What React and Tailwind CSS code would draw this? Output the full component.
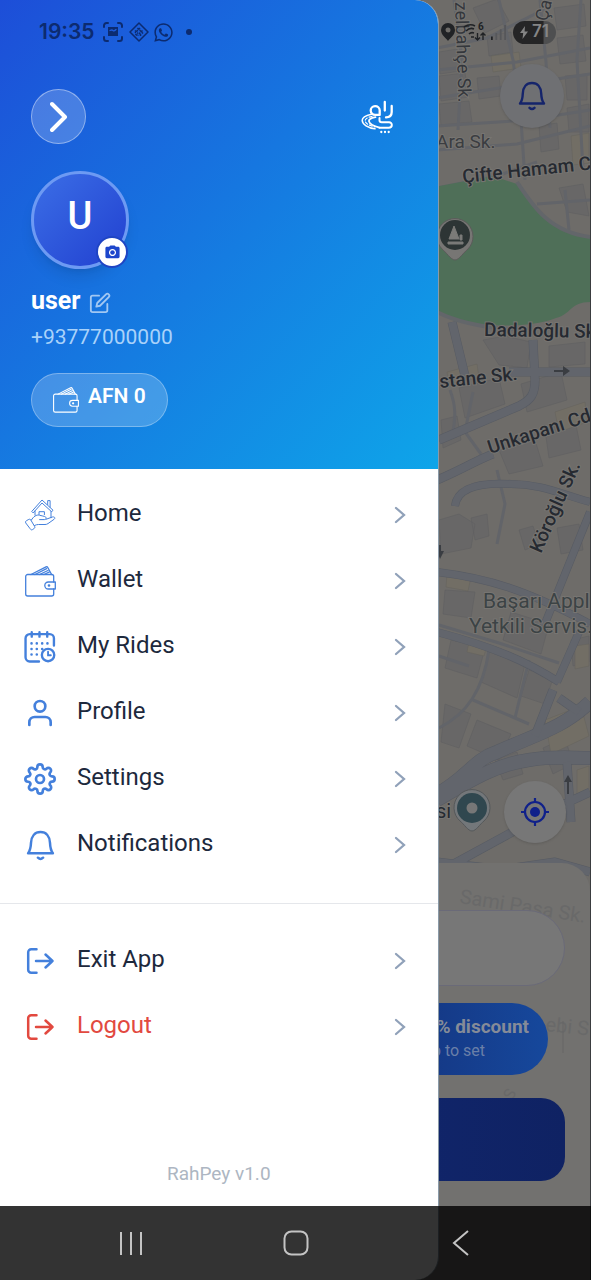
import { FiEdit, FiSettings, FiUser } from 'react-icons/fi';
import { FaWhatsapp } from 'react-icons/fa';
import { MdCameraAlt } from 'react-icons/md';

function HomeIcon() {
    return (
        <svg width="31" height="32" viewBox="0 0 31 32" fill="none" stroke="currentColor" strokeWidth="1" strokeLinejoin="round" strokeLinecap="round">
            <path d="M7 12.2 17 1 28 11.2l-1.3 1.6L17 4 8.4 13.6z" />
            <path d="M22.7 5.6V1.6h2.4v6.6M10 12v4M26 12.5v6.2M14 15.6v-2.9h5.4v2.9" />
            <path d="M.6 23.6c-.4-1 .2-1.6 1-2l2.2-1.2c.8-.4 1.6-.2 2 .6l3.8 6.4c.5 1 .3 1.6-.5 2.1l-1.6 1.1c-.9.5-1.5.4-2.1-.5z" />
            <path d="M6.4 21c2-3.400 5-5.600 8-4.800 2 .5 3.700.9 5 1.200 2.400.5 2.200 3.200 0 3.200h-4.800M21 20.300l6.400-2.300c1.800-.5 3.300.8 1.800 2.200l-6.200 4.400c-1 .7-2 .9-3 .9h-6.500c-1.500 0-2.500.3-4 1" />
        </svg>
    );
}

function WalletIcon({ size = 31 }) {
    return (
        <svg width={size} height={size} viewBox="0 0 31 31" fill="none" stroke="currentColor" strokeWidth="1.300" strokeLinejoin="round" strokeLinecap="round">
            <path d="M28.700 16V10.500a2 2 0 0 0-2-2H2.700a2 2 0 0 0-2 2v17.500a2 2 0 0 0 2 2h24a2 2 0 0 0 2-2V23" />
            <path d="M30.300 16h-7a3.500 3.500 0 0 0 0 7h7z" />
            <path d="M6 8.500 21 .9q1.200-.5 1.800.6l3.800 7M10 8.500l11.600-5.800M14.600 8.500l8.300-4M19 8.500l5-2.300" />
            <circle cx="24" cy="19.500" r=".7" />
        </svg>
    );
}

function RidesIcon() {
    return (
        <svg width="32" height="32" viewBox="0 0 31 31" fill="none" stroke="currentColor" strokeWidth="2.300" strokeLinecap="round">
            <path d="M29 14V7a4 4 0 0 0-4-4H5.500a4 4 0 0 0-4 4v18.500a4 4 0 0 0 4 4h9" />
            <path d="M7.500 1.200v4.300M15 1.200v4.300M22.500 1.200v4.300" />
            <path d="M7.300 12h.01M12.400 12h.01M17.600 12h.01M22.700 12h.01M7.300 17.400h.01M12.400 17.400h.01M17.600 17.400h.01M7.300 22.800h.01M12.400 22.800h.01" strokeWidth="2.500" />
            <circle cx="23.300" cy="23.300" r="6" />
            <path d="M23.300 20v3.500h2.700" strokeWidth="1.800" />
        </svg>
    );
}

function BellIcon({ size = 31 }) {
    return (
        <svg width={size} height={size} viewBox="0 0 30 30" fill="none" stroke="currentColor" strokeWidth="2.400" strokeLinecap="round" strokeLinejoin="round">
            <path d="M3 22.500h24c-2-2.500-2.600-5-2.800-10C23.900 6 20.500 2 15 2S6.100 6 5.800 12.500C5.600 17.500 5 20 3 22.500z" />
            <path d="M12.500 26.800q2.500 2.400 5 0" />
        </svg>
    );
}

function ExitIcon() {
    return (
        <svg width="30" height="30" viewBox="0 0 30 30" fill="none" stroke="currentColor" strokeWidth="2.500" strokeLinecap="round" strokeLinejoin="round">
            <path d="M11.500 3.200H6.200a3 3 0 0 0-3 3v17.600a3 3 0 0 0 3 3h5.300" />
            <path d="M11 15h16.500M20.500 8.500 27.500 15l-7 6.500" />
        </svg>
    );
}

function Chevron() {
    return (
        <svg width="12" height="18" viewBox="0 0 12 18" fill="none" stroke="currentColor" strokeWidth="2.300" strokeLinecap="round" className="text-slate-400">
            <path d="m2 2 8 7-8 7" />
        </svg>
    );
}

function Logo() {
    return (
        <svg width="34" height="35" viewBox="0 0 34 35" fill="none" stroke="#fff" strokeWidth="2.300" strokeLinecap="round" strokeLinejoin="round">
            <path d="M23.800 3v8.500M30.700 7v6c0 3.500-2.200 5.300-5.700 5.400" />
            <path d="M18.700 16v-4.700a4.500 4.300 0 1 0-4.500 4.500h4.500" />
            <path d="M18.500 19v2.200c0 1.500 1 2 2.200 2H28c3.800 0 3.800 5.600-.3 5.600h-9.200" strokeWidth="2" />
            <path d="M10.500 15.200C5 16.500 1.200 18 1.200 21.200c0 4.300 6 7.800 12.800 8.600" strokeWidth="1.500" />
            <path d="M11 17.300c-4.500 1.200-6.800 2.400-6.800 4.500 0 2.700 4.500 5 9.800 6" strokeWidth="1.200" strokeDasharray="3 2" />
            <path d="M14.500 18.200c-5 1-7 2.200-6.500 4.200.5 2.200 5 4.800 10.500 6.200" strokeWidth="1.800" />
            <path d="M20.300 33h.01M24 33h.01M27.700 33h.01" strokeWidth="2.300" />
        </svg>
    );
}

const mainItems = [
    { label: 'Home', icon: <HomeIcon /> },
    { label: 'Wallet', icon: <WalletIcon /> },
    { label: 'My Rides', icon: <RidesIcon /> },
    { label: 'Profile', icon: <FiUser size={32} /> },
    { label: 'Settings', icon: <FiSettings size={32} /> },
    { label: 'Notifications', icon: <BellIcon /> },
];

const exitItems = [
    { label: 'Exit App', icon: <ExitIcon /> },
    { label: 'Logout', icon: <ExitIcon />, danger: true },
];

function MenuItem({ item }) {
    return (
        <li>
            <button type="button" className="flex h-[66px] w-full items-center pl-6 pr-8 text-left">
                <span className={`flex w-8 justify-center ${item.danger ? 'text-[#e2493f]' : 'text-[#4480dc]'}`}>{item.icon}</span>
                <span className={`flex-1 pb-1 pl-[21px] text-[24px] ${item.danger ? 'text-[#e2493f]' : 'text-slate-800'}`}>
                    {item.label}
                </span>
                <Chevron />
            </button>
        </li>
    );
}

// Street map behind the drawer
function StreetMap() {
    return (
        <svg className="absolute inset-0 h-full w-full" viewBox="0 0 591 1280" preserveAspectRatio="xMaxYMin slice" fill="none">
            <rect width="591" height="1280" fill="#6e6c69" />

            {/* blocks */}
            <g fill="#686767" stroke="#5f5f61" strokeWidth=".6">
                <path d="M440 52l18-3 3 22-20 3zM474 8l24-9 12 22-24 12zM440 76l26-3 4 24-28 4zM478 78l22-2 2 20-22 3zM488 36l24-4 2 20-24 4zM440 104l30-3 3 21-31 3z" />
                <path d="M555 8l30-4 2 22-29 4zM558 38l26-3 3 26-26 3zM566 76l22-2v26h-20zM568 108l22-4v28h-20zM540 126l18-3 2 26-18 3zM560 188l24-4 6 32-22-4z" />
                <path d="M484 340l22-4 26 6-4 26-28-3zM550 346l36-4v22l-36 3zM460 388l40-10 6 26-40 14zM522 384l40-12 6 28-40 12zM442 420l16-4 4 24-18 8zM500 450l36-10 8 26-34 8zM546 430l30-10 6 30-32 8z" />
                <path d="M440 520l20-6 16 10-4 24-30 6zM472 518l16-4 2 22-14 4zM520 530l14-4 6 18-14 6zM558 528l22-4 4 26-22 4zM446 590l30 2-4 26-28-4zM452 640l34 8-8 30-32-10zM490 652l36 12-8 34-36-16zM530 670l24 8-8 26-24-8z" />
                <path d="M446 704l26 10-12 34-18-6zM478 720l34 14-12 26-32-14zM544 748l22-10 8 26-20 10zM496 760l22-8 6 22-20 6zM572 640l18-4v26l-16 4zM512 612l38 12-8 30-38-14zM516 824l22-10 8 16-18 12z" />
            </g>
            <g fill="#726e65" stroke="#65625d" strokeWidth=".5">
                <path d="M492 56l28-4 2 16-28 4zM572 136l18-3v30l-16 2zM556 412l30-10 2 20-28 10zM448 372l30-8 2 14-30 6zM448 574l24 3-3 14-22-4zM576 646l14-2v22l-14 3zM546 720l36-14 8 30-38 18zM578 770l12-4v26l-12 5zM470 642l18 4-3 10-17-4z" />
            </g>

            {/* minor streets */}
            <g stroke="#626469" strokeWidth="3">
                <path d="M438 48l50-10 60-30M438 70l80-8 73-14M438 98l100-16 53-8M438 126l90-6 63-10M438 150l80-6 73-18M455 0l8 60-4 70M500 0l14 60 8 60 4 60M541 0l6 62 4 66M582 0l-4 60 6 110" />
                <path d="M438 188l60-12 40-14M538 204l53-4M566 190l4 40" />
                <path d="M498 470l8 34-8 40M440 625l60 18 60 20M490 650c-6 40-22 64-50 78M474 700l56 24M530 660l-14 58M470 666l-30-10M451 390c6 16 6 26 2 48M474 392l-8 40 16 22" />
            </g>

            {/* main streets */}
            <g stroke="#575b63" strokeLinejoin="round">
                <path d="M453 322l14 58M534 340l2 40c0 14-4 20-16 26l-80 34M438 480c20-8 44-22 56-26M510 372h81" strokeWidth="9" />
                <path d="M456 506c2-18 22-24 56-22 30 0 50 10 79 18" strokeWidth="8" />
                <path d="M438 572c50 6 90 18 153 52M591 512l-46 114M438 632c60 16 90 30 122 50M558 682l22-50" strokeWidth="8" />
                <path d="M438 794c30-16 36-34 60-42 40-18 66-24 93-50M438 800c34-20 60-36 92-40 24-4 40-2 61-2" strokeWidth="14" />
                <path d="M568 762l4 60M591 792l-30 14-110 60M554 690l-18 46M560 698l20 14M500 870l56-8 35 10M438 862l50 6" strokeWidth="9" />
            </g>
            <g stroke="#62656c" strokeLinejoin="round">
                <path d="M453 322l14 58M534 340l2 40c0 14-4 20-16 26l-80 34M438 480c20-8 44-22 56-26M510 372h81" strokeWidth="8" />
                <path d="M456 506c2-18 22-24 56-22 30 0 50 10 79 18" strokeWidth="7" />
                <path d="M438 572c50 6 90 18 153 52M591 512l-46 114M438 632c60 16 90 30 122 50M558 682l22-50" strokeWidth="7" />
                <path d="M438 794c30-16 36-34 60-42 40-18 66-24 93-50M438 800c34-20 60-36 92-40 24-4 40-2 61-2" strokeWidth="13" />
                <path d="M568 762l4 60M591 792l-30 14-110 60M554 690l-18 46M560 698l20 14M500 870l56-8 35 10M438 862l50 6" strokeWidth="8" />
            </g>

            {/* park */}
            <path d="M430 188l64-12 24 8c16 22 30 48 73 53v65c-20 0-18 12-34 16-26 10-64 8-82 6-18-4-30-8-45-14z" fill="#4f6f58" />
            <path d="M518 182c16 24 32 50 73 55M438 312c20 10 50 17 90 18" stroke="#63666a" strokeWidth="4" />

            {/* direction arrows */}
            <g stroke="#3a3d42" strokeWidth="2">
                <path d="M555 371h12M569 794v-14M441 545v10" />
                <path d="M564 366l7 5-7 5zM565 782l4-7 4 7zM438 551l3 8 4-8z" fill="#3a3d42" strokeWidth="0" />
            </g>

            <g fontFamily="Roboto, sans-serif" fontSize="19" fill="#262a31" stroke="#777572" strokeWidth="2" paintOrder="stroke">
                <text transform="translate(456 2) rotate(88)" fontSize="18" fill="#34373c">zelbahçe Sk.</text>
                <text transform="translate(548 22) rotate(-76)" fontSize="18" fill="#34373c">Ça</text>
                <text x="437" y="148" fill="#3b3d41">Ara Sk.</text>
                <text transform="translate(464 183) rotate(-6)" fontWeight="500">Çifte Hamam C</text>
                <text transform="translate(485 336) rotate(1)" fontWeight="500">Dadaloğlu Sk</text>
                <text transform="translate(441 388) rotate(-6)" fontWeight="500">stane Sk.</text>
                <text transform="translate(491 454) rotate(-18)" fontWeight="500">Unkapanı Cd</text>
                <text transform="translate(542 554) rotate(-66)" fontWeight="500">Köroğlu Sk.</text>
                <text x="484" y="608" fontSize="21" fill="#3c4345">Başarı Appl</text>
                <text x="470" y="633" fontSize="21" fill="#3c4345">Yetkili Servis.</text>
                <text x="437" y="818" fontSize="20">si</text>
            </g>

            {/* place pins */}
            <path d="M456 260c-4 0-9-8-13-11a18 18 0 1 1 26 0c-4 3-9 11-13 11z" fill="#777674" stroke="#5b5b5a" />
            <circle cx="456" cy="235" r="15" fill="#2d3535" />
            <path d="M449 242h15v2h-15zM455 226l-5 13h10zM461 235h2v5h-2z" fill="#7b7b78" stroke="#7b7b78" />
            <path d="M473 831c-4 0-8-7-12-10a18 18 0 1 1 24 0c-4 3-8 10-12 10z" fill="#73777a" stroke="#55585a" />
            <circle cx="473" cy="808" r="15" fill="#30474f" />
            <circle cx="473" cy="808" r="5.500" fill="#777" />
        </svg>
    );
}

function MapScreen() {
    return (
        <div className="relative col-start-1 row-start-1 flex min-w-0 flex-col items-end overflow-hidden border-r border-[#3a3c3f]">
            <StreetMap />
            <div className="relative flex h-16 items-center gap-[7px] pr-[34px] text-[#202225]">
                <svg width="14" height="18" viewBox="0 0 14 18">
                    <path d="M7 0a7 7 0 0 0-7 7c0 5 5 8 7 11 2-3 7-6 7-11a7 7 0 0 0-7-7zm0 4.500a2.500 2.500 0 1 1 0 5 2.500 2.500 0 0 1 0-5z" fill="currentColor" fillRule="evenodd" />
                </svg>
                <svg width="26" height="20" viewBox="0 0 26 20" fill="none" stroke="currentColor" strokeWidth="1.600" className="-mr-1">
                    <path d="M2 5q6-4 11-1M4 9q4-4 8-2M7 12q2-2 5-1M9 15h3" />
                    <path d="M15.500 11v7m-2.500-2.500 2.500 2.500 2.500-2.500M21 18v-7m-2.500 2.500L21 11l2.500 2.500" strokeWidth="1.400" />
                    <text x="16" y="8" fontSize="10" fontFamily="Roboto, sans-serif" fontWeight="700" fill="currentColor" stroke="none">6</text>
                </svg>
                <svg width="15" height="18" viewBox="0 0 17 18" stroke="#56575a" strokeWidth="2">
                    <path d="M1 18v-4" stroke="#202225" />
                    <path d="M6 18v-8M11 18V6M16 18V1" />
                </svg>
                <span className="flex h-[23px] w-[43px] items-center justify-center gap-1 rounded-full bg-linear-to-r from-[#252526] from-70% to-[#4e4f50] to-72% font-['Inter',sans-serif] text-[17px] font-semibold text-[#858585]">
                    <svg width="8" height="13" viewBox="0 0 8 13" fill="currentColor"><path d="M5 0 0 7h3.200L2.500 13 8 5.500H4.600z" /></svg>
                    71
                </span>
            </div>
            <button type="button" aria-label="Alerts" className="relative mr-[26px] flex size-16 items-center justify-center rounded-full bg-[#6f7073] text-[#15246b] shadow-sm">
                <BellIcon size={30} />
            </button>
            <button type="button" aria-label="My location" className="relative mr-6 mt-auto mb-5 flex size-[62px] items-center justify-center rounded-full bg-[#777777] text-[#10218a] shadow-sm">
                <svg width="28" height="28" viewBox="0 0 28 28" fill="none" stroke="currentColor" strokeWidth="2.200">
                    <circle cx="14" cy="14" r="10" />
                    <circle cx="14" cy="14" r="5" fill="currentColor" stroke="none" />
                    <path d="M14 0v5M14 23v5M0 14h5M23 14h5" />
                </svg>
            </button>
            <div className="relative flex w-full flex-col items-end rounded-t-[28px] bg-[#72716f] px-[25px] pt-[47px] pb-[99px]">
                <svg className="absolute right-0 top-0 h-full w-[153px]" viewBox="0 0 153 417" fontFamily="Roboto, sans-serif" fontSize="20" fill="#696969">
                    <text transform="translate(22 40) rotate(9)">Sami Paşa Sk.</text>
                    <text transform="translate(108 168) rotate(6)">ebi S</text>
                    <text transform="translate(75 238) rotate(-60)" fontSize="16">S</text>
                    <path d="M126 158v32" stroke="#666" />
                </svg>
                <input aria-label="Destination" className="relative h-[76px] w-full rounded-full border border-[#6a6a78] bg-[#777777] px-8" />
                <button type="button" className="relative mr-[17px] mt-[17px] flex h-[72px] flex-col items-start justify-center rounded-full bg-linear-to-r/srgb from-[#142f78] to-[#16489c] pr-[19px] pl-16 text-left">
                    <span className="text-[19px] leading-6 font-bold text-[#858b98]">10% discount</span>
                    <span className="text-base leading-6 text-[#6a7fa8]">Tap to set</span>
                </button>
                <button type="button" aria-label="Continue" className="relative mt-[23px] h-[83px] w-full rounded-3xl bg-linear-to-r/srgb from-[#142c7a] to-[#0f2263]" />
            </div>
        </div>
    );
}

function DrawerHeader() {
    return (
        <header className="flex flex-col items-start bg-linear-to-br/srgb from-[#1d4ed8] to-[#0ea5e9] px-[31px] pb-[42px]">
            <div className="flex h-16 items-center gap-2 pl-2 text-[#0c2b70]">
                <span className="font-['Inter',sans-serif] text-[21px] font-semibold">19:35</span>
                <svg width="20" height="20" viewBox="0 0 20 20" fill="none" stroke="currentColor" strokeWidth="2" strokeLinecap="round">
                    <path d="M1 5V3.500A2.500 2.500 0 0 1 3.500 1H5M15 1h1.500A2.500 2.500 0 0 1 19 3.500V5M19 15v1.500a2.500 2.500 0 0 1-2.500 2.500H15M5 19H3.500A2.500 2.500 0 0 1 1 16.500V15" />
                    <path d="M6 6h8v7H6z" fill="currentColor" />
                    <path d="M7 8.500q2-1 3 0t3-1" stroke="#1d5cdb" strokeWidth="1.300" />
                </svg>
                <svg width="20" height="20" viewBox="0 0 20 20" fill="none" stroke="currentColor" strokeWidth="1.500" className="-ml-[2px]">
                    <path d="M10 1l9 9-9 9-9-9z" strokeLinejoin="round" />
                    <path d="M6 8.500l3 3M8.500 6l5.500 5.500M6.500 12l2 2M11 6l-5 5M13.500 8.500l-5 5M11.500 12v2" strokeDasharray="2 1" />
                </svg>
                <FaWhatsapp size={21} className="-ml-1" />
                <span className="ml-1 size-[6px] rounded-full bg-current" />
            </div>
            <div className="mt-[25px] flex w-full items-center justify-between pr-3">
                <button type="button" aria-label="Close menu" className="flex size-[55px] items-center justify-center rounded-full border border-white/40 bg-white/20">
                    <svg width="18" height="32" viewBox="0 0 18 32" fill="none" stroke="#fff" strokeWidth="4" strokeLinecap="round" strokeLinejoin="round">
                        <path d="m2 3 13 13L2 29" />
                    </svg>
                </button>
                <Logo />
            </div>
            <div className="relative mt-[27px] flex size-[98px] items-center justify-center rounded-full border-3 border-[#6d9af3] bg-linear-to-br/srgb from-[#3b6ee6] to-[#2140d0] shadow-lg">
                <span className="pb-2 text-[38px] leading-none font-medium text-white">U</span>
                <button type="button" aria-label="Change photo" className="absolute -right-[2px] -bottom-[2px] flex size-8 items-center justify-center rounded-full border-2 border-[#1f45c4] bg-white text-[#1d46cc]">
                    <MdCameraAlt size={17} />
                </button>
            </div>
            <div className="mt-4 flex items-center gap-2 text-white">
                <h1 className="text-[25px] leading-8 font-bold">user</h1>
                <button type="button" aria-label="Edit name" className="pt-1 text-white/60"><FiEdit size={22} /></button>
            </div>
            <p className="mt-1 text-[21px] leading-8 text-[#a9d2fa]">+93777000000</p>
            <button type="button" className="mt-5 flex h-[54px] items-center gap-[9px] rounded-full border border-white/30 bg-white/20 px-[21px] text-white">
                <WalletIcon size={26} />
                <span className="pb-[6px] text-[21px] font-semibold">AFN 0</span>
            </button>
        </header>
    );
}

function Drawer() {
    return (
        <aside className="relative z-10 col-start-1 row-start-1 flex w-[74.2%] min-w-0 flex-col overflow-hidden rounded-r-3xl bg-white pb-[74px] border-r border-[#8a9aa8]">
            <DrawerHeader />
            <nav className="flex flex-1 flex-col pt-[13px]">
                <ul>
                    {mainItems.map((item) => (
                        <MenuItem key={item.label} item={item} />
                    ))}
                </ul>
                <hr className="mt-[25px] mb-6 border-gray-200" />
                <ul>
                    {exitItems.map((item) => (
                        <MenuItem key={item.label} item={item} />
                    ))}
                </ul>
                <p className="mt-auto pb-5 text-center text-[19px] leading-6 text-[#adb6c2]">RahPey v1.0</p>
            </nav>
        </aside>
    );
}

export default function App() {
    return (
        <div className="grid min-h-screen font-['Roboto',sans-serif]">
            <MapScreen />
            <Drawer />
            <div className="relative z-20 col-start-1 row-start-1 grid h-[74px] grid-cols-3 self-end bg-black/80 px-12 text-[#c4c4c4]">
                <button type="button" aria-label="Recent apps" className="flex items-center justify-center">
                    <svg width="24" height="24" viewBox="0 0 24 24" stroke="currentColor" strokeWidth="2"><path d="M2 1v23M12 1v23M22 1v23" /></svg>
                </button>
                <button type="button" aria-label="Home screen" className="flex items-center justify-center">
                    <svg width="26" height="26" viewBox="0 0 26 26" fill="none" stroke="currentColor" strokeWidth="2"><rect x="1.500" y="1.500" width="23" height="23" rx="7" /></svg>
                </button>
                <button type="button" aria-label="Back" className="flex items-center justify-center">
                    <svg width="18" height="26" viewBox="0 0 18 26" fill="none" stroke="currentColor" strokeWidth="2"><path d="M16 1 2 13l14 12" /></svg>
                </button>
            </div>
        </div>
    );
}
